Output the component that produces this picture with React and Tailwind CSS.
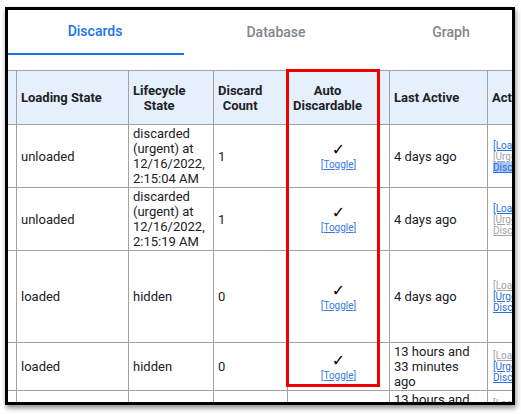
import React from "react";

const F = "font-['Roboto','Liberation_Sans',sans-serif]";

function Check() {
  return (
    <div className="flex flex-col items-center">
      <div className="font-['DejaVu_Sans',sans-serif] text-[16px] leading-[18px] font-bold text-black">✓</div>
      <a className="text-[10px] leading-[12px] text-[#3a78e2] underline">[Toggle]</a>
    </div>
  );
}

function Actions({ load, urgent, discard, hl }) {
  const c = (on) => (on ? "text-[#2a6fe0]" : "text-[#a0a4a8]");
  return (
    <div className="text-[10px] leading-[11px] whitespace-nowrap">
      <div><a className={`underline ${c(load)}`}>[Load]</a></div>
      <div><a className={`underline ${c(urgent)}`}>[Urgent</a></div>
      <div>
        <a className={`underline ${c(discard)} ${hl ? "bg-[#a9c9f7] text-[#2a6fe0]" : ""}`}>Discard]</a>
      </div>
    </div>
  );
}

const td = "border border-[#a2a2a2] px-[4px] py-px align-middle text-[13px] leading-[15px] text-[#202124]";
const th = "border border-[#a2a2a2] px-[4px] py-px align-middle text-left text-[13px] leading-[15px] font-bold text-[#202124] bg-[#e6effc]";

const rows = [
  {
    h: "h-[63px]",
    load: "unloaded",
    life: ["discarded", "(urgent) at", "12/16/2022,", "2:15:04 AM"],
    count: "1",
    last: ["4 days ago"],
    act: { load: true, urgent: false, discard: true, hl: true },
  },
  {
    h: "h-[63px]",
    load: "unloaded",
    life: ["discarded", "(urgent) at", "12/16/2022,", "2:15:19 AM"],
    count: "1",
    last: ["4 days ago"],
    act: { load: true, urgent: false, discard: false },
  },
  {
    h: "h-[92px]",
    load: "loaded",
    life: ["hidden"],
    count: "0",
    last: ["4 days ago"],
    act: { load: false, urgent: true, discard: true },
  },
  {
    h: "h-[48px]",
    load: "loaded",
    life: ["hidden"],
    count: "0",
    last: ["13 hours and", "33 minutes", "ago"],
    act: { load: false, urgent: true, discard: true },
  },
  {
    h: "h-[48px]",
    load: "loaded",
    life: ["hidden"],
    count: "0",
    last: ["13 hours and", "33 minutes", "ago"],
    act: { load: false, urgent: true, discard: true },
  },
];

export default function App() {
  return (
    <div className={`relative w-[521px] h-[414px] bg-white overflow-hidden ${F}`}>
      <div className="absolute left-[5px] top-[7px] w-[510px] h-[398px] border-[3px] border-black bg-white overflow-hidden shadow-[1px_3px_5px_rgba(0,0,0,0.45)]">
        <div className="flex h-[45px]">
          <div className="w-[176px] shrink-0 pr-[2px] flex items-center justify-center border-b-2 border-[#1a73e8] text-[14px] font-medium text-[#1a73e8]">
            Discards
          </div>
          <div className="w-[184px] shrink-0 flex items-center justify-center text-[14px] font-medium text-[#80868b]">
            Database
          </div>
          <div className="w-[166px] shrink-0 flex items-center justify-center text-[14px] font-medium text-[#80868b]">
            Graph
          </div>
        </div>
        <div className="h-[15px]" />
        <table className="table-fixed border-collapse w-[599px] -ml-px">
          <colgroup>
            <col className="w-[9px]" />
            <col className="w-[112px]" />
            <col className="w-[85px]" />
            <col className="w-[74px]" />
            <col className="w-[102px]" />
            <col className="w-[98px]" />
            <col className="w-[119px]" />
          </colgroup>
          <thead>
            <tr className="h-[54px]">
              <th className={th}></th>
              <th className={th}>Loading State</th>
              <th className={th}>
                <div className="inline-block text-center">Lifecycle<br />State</div>
              </th>
              <th className={th}>
                <div className="inline-block text-center">Discard<br />Count</div>
              </th>
              <th className={`${th} pl-[5px]`}>
                <div className="inline-block text-center">Auto<br />Discardable</div>
              </th>
              <th className={th}>Last Active</th>
              <th className={th}>Actions</th>
            </tr>
          </thead>
          <tbody>
            {rows.map((r, i) => (
              <tr key={i} className={r.h}>
                <td className={td}></td>
                <td className={td}>{r.load}</td>
                <td className={td}>
                  {r.life.map((l, j) => (
                    <div key={j}>{l}</div>
                  ))}
                </td>
                <td className={td}>{r.count}</td>
                <td className={`${td} text-center`}>
                  <Check />
                </td>
                <td className={td}>
                  {r.last.map((l, j) => (
                    <div key={j}>{l}</div>
                  ))}
                </td>
                <td className={`${td} pl-[5px]`}>
                  <Actions {...r.act} />
                </td>
              </tr>
            ))}
          </tbody>
        </table>
      </div>
      <div className="absolute left-[286px] top-[69px] w-[94px] h-[318px] border-[3px] border-[#ee0000]" />
    </div>
  );
}
